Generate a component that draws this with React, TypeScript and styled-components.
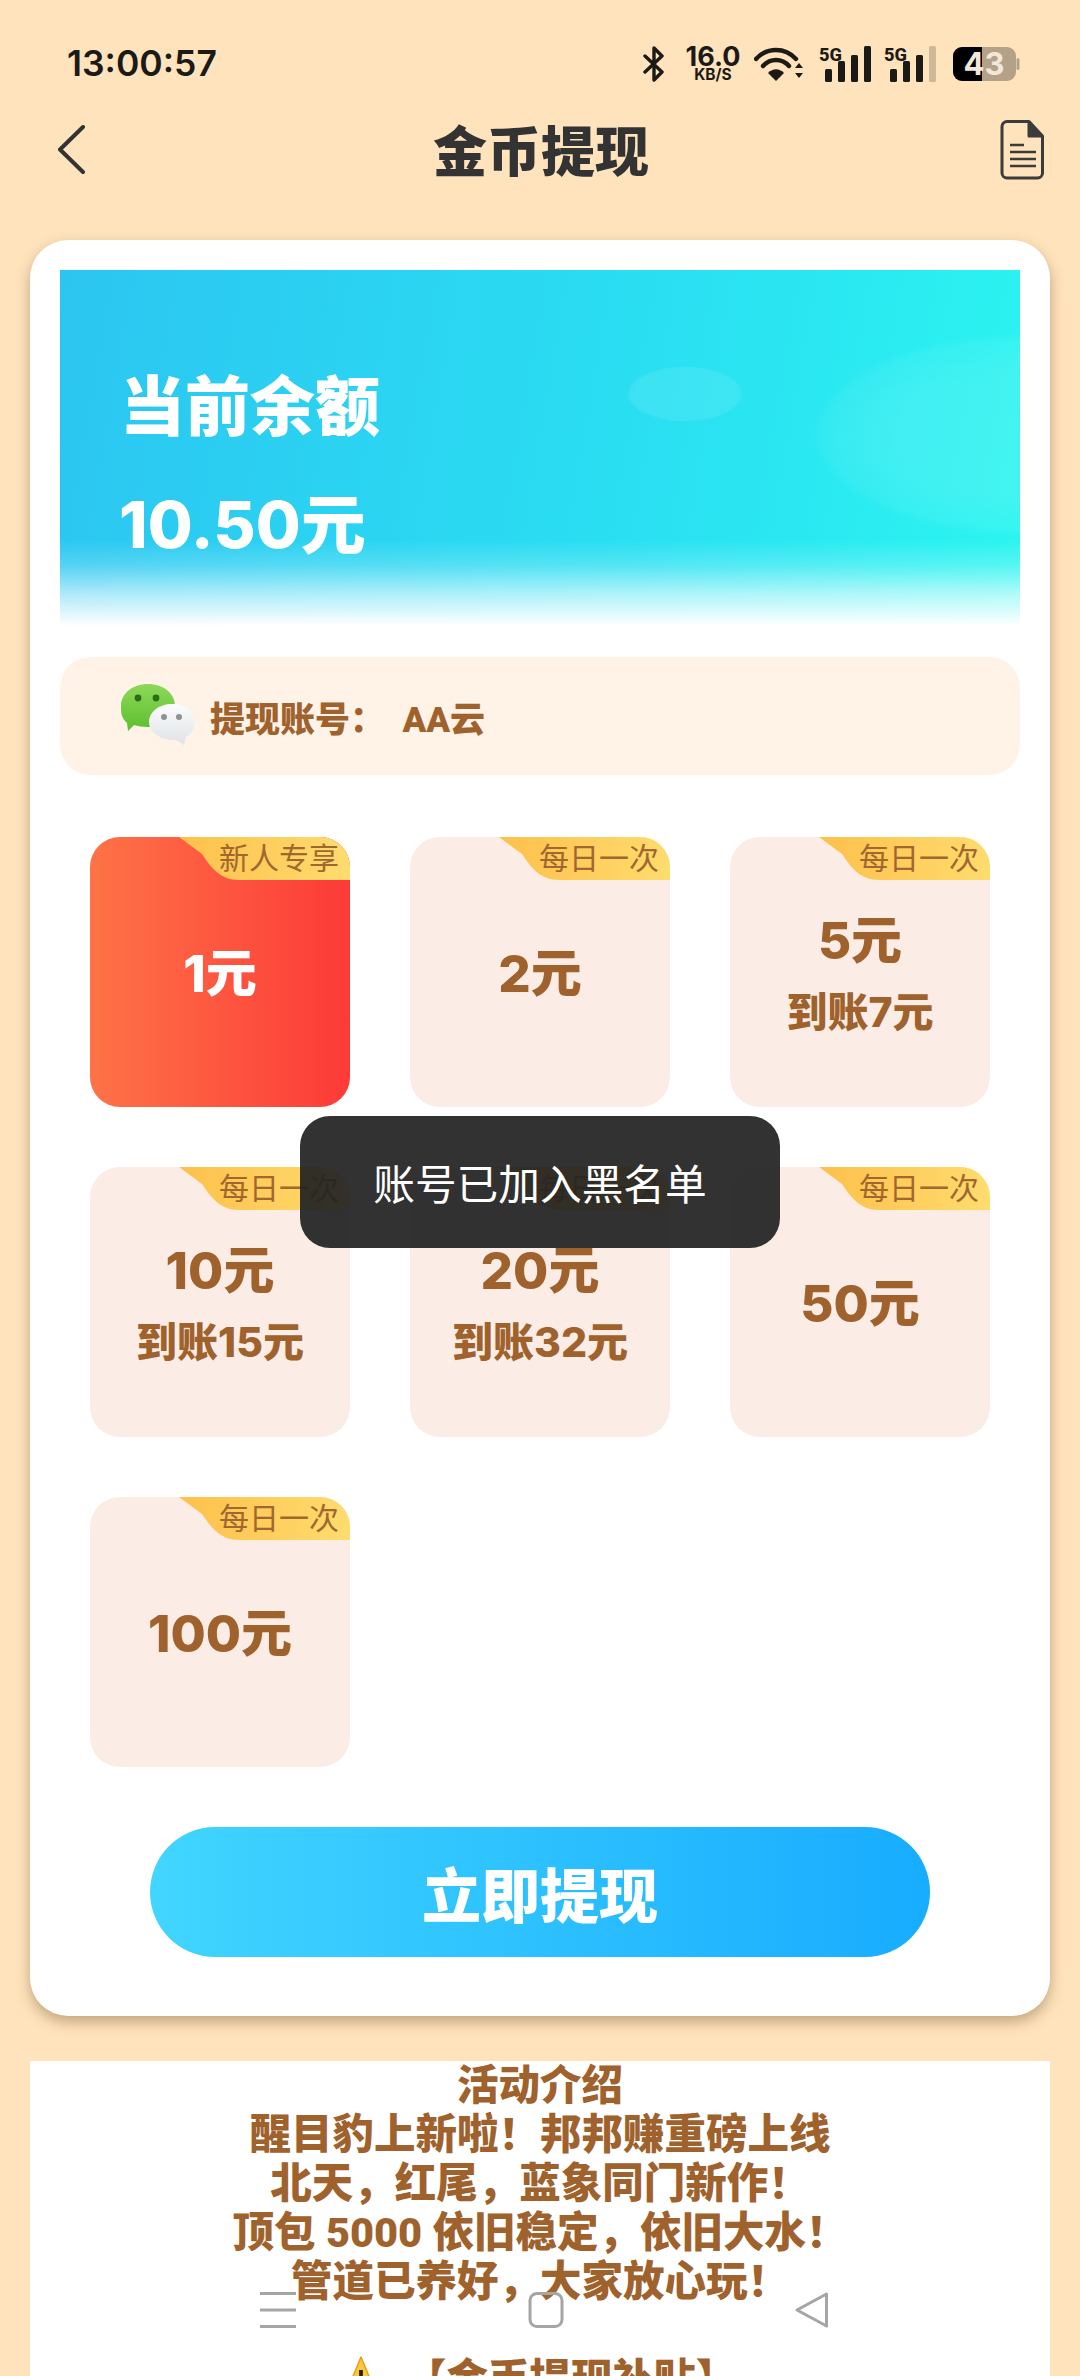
import React from "react";
import styled, { createGlobalStyle } from "styled-components";

const CJK = `"Roboto", "Noto Sans CJK SC", "Noto Sans", sans-serif`;
const FIGURES = `"Inter", "Noto Sans CJK SC", "Noto Sans", sans-serif`;

const Global = createGlobalStyle`
  html, body { margin: 0; padding: 0; background: #ffe3bc; }
  * { box-sizing: border-box; }
`;

const Page = styled.div`
  position: relative;
  width: 1080px;
  height: 2376px;
  overflow: hidden;
  background: #ffe3bc;
  font-family: ${CJK};
`;

const StatusBar = styled.div`
  height: 100px;
  padding: 44px 60px 0 67px;
  display: flex;
  justify-content: space-between;
  align-items: flex-start;
`;

const Time = styled.div`
  font-family: "Inter", sans-serif;
  font-size: 35.5px;
  line-height: 40px;
  font-weight: 600;
  color: #1c1a16;
`;

const StatusIcons = styled.div`
  display: flex;
  align-items: flex-start;
  padding-top: 2px;
`;

const Speed = styled.div`
  width: 56px;
  height: 36px;
  margin: 0 13px 0 20px;
  display: flex;
  flex-direction: column;
  align-items: center;
  color: #1c1a16;
  font-family: "Inter", sans-serif;
  font-weight: 700;
`;

const SpeedValue = styled.span`
  font-size: 27px;
  line-height: 22px;
`;

const SpeedUnit = styled.span`
  font-size: 15.5px;
  line-height: 14px;
`;

const Header = styled.header`
  height: 106px;
  margin-bottom: 34px;
  padding: 0 36px 6px 56px;
  display: flex;
  align-items: center;
  justify-content: space-between;
`;

const Title = styled.h1`
  margin: 8px 4px 0 0;
  font-size: 54px;
  line-height: 60px;
  font-weight: 900;
  color: #333;
`;

const Card = styled.section`
  margin: 0 30px;
  padding: 30px 30px 59px;
  background: #fff;
  border-radius: 38px;
  box-shadow: 0 6px 14px rgba(120, 90, 50, 0.45);
`;

const Banner = styled.div`
  position: relative;
  height: 356px;
  padding: 99px 0 0 60px;
  color: #fff;
  font-family: ${FIGURES};
  font-weight: 800;
  background:
    linear-gradient(to bottom, rgba(255,255,255,0) 76%, rgba(255,255,255,0.2) 83%, rgba(255,255,255,0.62) 91%, #fff 100%),
    radial-gradient(ellipse 58px 28px at 625px 124px, rgba(255,255,255,0.09) 94%, rgba(255,255,255,0) 100%),
    radial-gradient(ellipse 210px 102px at 962px 165px, rgba(255,255,255,0.11) 60%, rgba(255,255,255,0.06) 92%, rgba(255,255,255,0) 100%),
    linear-gradient(100deg, #2cc5f1 0%, #2ae0f2 62%, #2bf5f0 100%);
`;

const BalanceLabel = styled.div`
  font-size: 65px;
  line-height: 76px;
`;

const BalanceValue = styled.div`
  margin-top: 42px;
  font-size: 65px;
  line-height: 76px;
  margin-left: -1px;
`;

const Account = styled.div`
  margin-top: 31px;
  height: 118px;
  padding: 0 58px;
  border-radius: 30px;
  background: #fff3e8;
  display: flex;
  align-items: center;
  gap: 16px;
  color: #a0622d;
  font-size: 35px;
  font-weight: 900;
`;

const AccountName = styled.span`
  margin-left: -2px;
  white-space: pre;
`;

const Options = styled.div`
  margin-top: 62px;
  padding: 0 30px;
  display: grid;
  grid-template-columns: repeat(3, 260px);
  grid-auto-rows: 270px;
  gap: 60px;
`;

const Option = styled.div<{ $active?: boolean }>`
  position: relative;
  overflow: hidden;
  border-radius: 30px;
  background: ${(p) => (p.$active ? "linear-gradient(90deg, #fd7347, #fd3a38)" : "#fbede6")};
  color: ${(p) => (p.$active ? "#fff" : "#a0622d")};
  display: flex;
  flex-direction: column;
  align-items: center;
  justify-content: center;
  font-family: ${FIGURES};
  font-weight: 800;
`;

const Ribbon = styled.div`
  position: absolute;
  top: 0;
  right: 0;
  width: 171px;
  height: 43px;
  padding-right: 11px;
  background: linear-gradient(90deg, #fdc04b, #ffdc6e);
  clip-path: path("M0 0 H171 V43 H60 C42 43 33 32 23 17 Z");
  color: #a0682f;
  font-size: 30px;
  line-height: 42px;
  font-weight: 400;
  text-align: right;
  white-space: nowrap;
`;

const Amount = styled.div`
  font-size: 51px;
  line-height: 60px;
  margin-top: 3px;
`;

const Bonus = styled.div`
  font-size: 41px;
  line-height: 50px;
  margin-top: 16px;
`;

const Submit = styled.button`
  display: block;
  width: 780px;
  height: 130px;
  margin: 60px auto 0;
  border: 0;
  border-radius: 65px;
  background: linear-gradient(90deg, #41d5ff, #18acff);
  color: #fff;
  font-family: inherit;
  font-size: 59px;
  font-weight: 900;
`;

const Intro = styled.section`
  margin: 45px 30px 0;
  background: #fff;
  color: #a0622d;
  font-size: 41.5px;
  line-height: 49px;
  font-weight: 900;
  text-align: center;
`;

const IntroLine = styled.div`
  white-space: pre;
`;

const Warn = styled.svg`
  width: 36px;
  height: 44px;
  margin-right: 26px;
  vertical-align: -6px;
`;

const Toast = styled.div`
  position: absolute;
  left: 300px;
  top: 1116px;
  width: 480px;
  height: 132px;
  border-radius: 30px;
  background: rgba(34, 34, 34, 0.93);
  color: #fff;
  font-size: 41.7px;
  font-weight: 400;
  display: flex;
  align-items: center;
  justify-content: center;
`;

const NavBar = styled.nav`
  position: absolute;
  left: 260px;
  top: 2292px;
  width: 569px;
  height: 36px;
  display: flex;
  justify-content: space-between;
  color: #a5a5a5;
`;

const Bluetooth = () => (
  <svg width="22" height="36" viewBox="0 0 22 36" fill="none" stroke="#1c1a16" strokeWidth="3.4" strokeLinejoin="round" strokeLinecap="round">
    <path d="M2 10 L19 26 L11 34 V2 L19 10 L2 26" />
  </svg>
);

const Wifi = () => (
  <svg width="50" height="36" viewBox="0 0 50 36" style={{ marginRight: 15 }}>
    <g fill="none" stroke="#1c1a16" strokeWidth="4.4" strokeLinecap="round">
      <path d="M2 13 C13 1 31 1 42 13" />
      <path d="M9 20 C16 12 28 12 35 20" />
    </g>
    <path d="M14 27 C19 22 25 22 30 27 L22 35 Z" fill="#1c1a16" />
    <path d="M41 22 L45 17 L49 22 Z M41 27 L49 27 L45 32 Z" fill="#1c1a16" />
  </svg>
);

const Signal = ({ dim, mr }: { dim?: boolean; mr: number }) => (
  <svg width="52" height="36" viewBox="0 0 52 36" overflow="visible" style={{ marginRight: mr }}>
    <text x="0" y="15" fontSize="19" fontWeight="800" fontFamily="Roboto, sans-serif" fill="#1c1a16" textLength="23" lengthAdjust="spacingAndGlyphs">5G</text>
    <rect x="6" y="23" width="7" height="13" rx="1.5" fill="#1c1a16" />
    <rect x="19" y="15" width="7" height="21" rx="1.5" fill="#1c1a16" />
    <rect x="32" y="9" width="7" height="27" rx="1.5" fill="#1c1a16" />
    <rect x="45" y="0" width="7" height="36" rx="1.5" fill={dim ? "#cdb999" : "#1c1a16"} />
  </svg>
);

const Battery = () => (
  <svg width="67" height="36" viewBox="0 0 67 36">
    <rect x="0" y="1" width="63" height="34" rx="9" fill="#b3a288" />
    <path d="M9 1 H29 V35 H9 a9 9 0 0 1 -9 -9 V10 a9 9 0 0 1 9 -9 Z" fill="#000" />
    <rect x="63.5" y="12" width="3" height="12" rx="1.5" fill="#b3a288" />
    <text x="31" y="29" textAnchor="middle" fontSize="31" fontWeight="700" fontFamily="Inter, sans-serif" fill="#f1e8da">43</text>
  </svg>
);

const BackIcon = () => (
  <svg width="30" height="50" viewBox="0 0 30 50" fill="none" stroke="#333" strokeWidth="4" strokeLinecap="round" strokeLinejoin="round">
    <path d="M27 2 L4 24.5 L27 47" />
  </svg>
);

const DocIcon = () => (
  <svg width="44" height="60" viewBox="0 0 44 60" fill="none" stroke="#3b3b3b" strokeWidth="3" strokeLinejoin="round">
    <path d="M7 1.5 H29 L42.5 16 V53 a5 5 0 0 1 -5 5 H7 a5 5 0 0 1 -5 -5 V6.5 a5 5 0 0 1 5 -5 Z" />
    <path d="M29 1.5 V16 H42.5" fill="#3b3b3b" />
    <path d="M10 25 H24 M10 32 H36 M10 39 H36 M10 46 H36" strokeWidth="2.6" />
  </svg>
);

const WeChat = () => (
  <svg width="78" height="64" viewBox="0 0 78 64">
    <defs>
      <linearGradient id="wg" x1="0" y1="0" x2="0" y2="1">
        <stop offset="0" stopColor="#8ed85a" />
        <stop offset="1" stopColor="#5cbf2e" />
      </linearGradient>
      <linearGradient id="ww" x1="0" y1="0" x2="0" y2="1">
        <stop offset="0" stopColor="#fbfcfd" />
        <stop offset="1" stopColor="#dfe3e6" />
      </linearGradient>
    </defs>
    <path d="M30 0 C46 0 57 10 57 22 C57 34 46 43 30 43 C24 43 20 42 16 41 L10 47 L9 39 C3 34 3 28 3 22 C3 10 14 0 30 0 Z" fill="url(#wg)" />
    <circle cx="20" cy="14" r="3.4" fill="#2d6e14" />
    <circle cx="38" cy="14" r="3.4" fill="#2d6e14" />
    <path d="M54 20 C67 20 77 28 77 38 C77 45 73 50 68 53 L66 61 L58 56 C44 57 31 49 31 38 C31 28 41 20 54 20 Z" fill="url(#ww)" />
    <circle cx="46" cy="33" r="3" fill="#8d9296" />
    <circle cx="61" cy="33" r="3" fill="#8d9296" />
  </svg>
);

const options = [
  { amount: "1元", tag: "新人专享", active: true },
  { amount: "2元", tag: "每日一次" },
  { amount: "5元", bonus: "到账7元", tag: "每日一次" },
  { amount: "10元", bonus: "到账15元", tag: "每日一次" },
  { amount: "20元", bonus: "到账32元", tag: "每日一次" },
  { amount: "50元", tag: "每日一次" },
  { amount: "100元", tag: "每日一次" },
];

const introLines = [
  "活动介绍",
  "醒目豹上新啦！邦邦赚重磅上线",
  "北天，红尾，蓝象同门新作！",
  "顶包 5000 依旧稳定，依旧大水！",
  "管道已养好，大家放心玩！",
  " ",
];

export default function App() {
  return (
    <Page>
      <Global />
      <StatusBar>
        <Time>13:00:57</Time>
        <StatusIcons>
          <Bluetooth />
          <Speed>
            <SpeedValue>16.0</SpeedValue>
            <SpeedUnit>KB/S</SpeedUnit>
          </Speed>
          <Wifi />
          <Signal mr={13} />
          <Signal dim mr={17} />
          <Battery />
        </StatusIcons>
      </StatusBar>
      <Header>
        <BackIcon />
        <Title>金币提现</Title>
        <DocIcon />
      </Header>
      <Card>
        <Banner>
          <BalanceLabel>当前余额</BalanceLabel>
          <BalanceValue>10.50元</BalanceValue>
        </Banner>
        <Account>
          <WeChat />
          <AccountName>提现账号：  AA云</AccountName>
        </Account>
        <Options>
          {options.map((o, i) => (
            <Option key={i} $active={o.active}>
              <Ribbon>{o.tag}</Ribbon>
              <Amount>{o.amount}</Amount>
              {o.bonus && <Bonus>{o.bonus}</Bonus>}
            </Option>
          ))}
        </Options>
        <Submit>立即提现</Submit>
      </Card>
      <Intro>
        {introLines.map((l, i) => (
          <IntroLine key={i}>{l}</IntroLine>
        ))}
        <IntroLine>
          <Warn viewBox="0 0 36 44">
            <path d="M18 1 L35 42 H1 Z" fill="#fdc93a" stroke="#e0a020" strokeWidth="1.5" strokeLinejoin="round" />
            <path d="M16 14 H20 L19.4 30 H16.6 Z" fill="#222" />
          </Warn>
          【金币提现补贴】
        </IntroLine>
      </Intro>
      <Toast>账号已加入黑名单</Toast>
      <NavBar>
        <svg width="36" height="36" viewBox="0 0 36 36" fill="#a5a5a5">
          <rect x="0" y="0" width="36" height="3" />
          <rect x="0" y="16.5" width="36" height="3" />
          <rect x="0" y="33" width="36" height="3" />
        </svg>
        <svg width="36" height="36" viewBox="0 0 36 36" fill="none" stroke="#a5a5a5" strokeWidth="3">
          <rect x="2" y="1.5" width="32" height="33" rx="7" />
        </svg>
        <svg width="34" height="36" viewBox="0 0 34 36" fill="none" stroke="#a5a5a5" strokeWidth="3" strokeLinejoin="round">
          <path d="M31.5 2 V34 L2 18 Z" />
        </svg>
      </NavBar>
    </Page>
  );
}
